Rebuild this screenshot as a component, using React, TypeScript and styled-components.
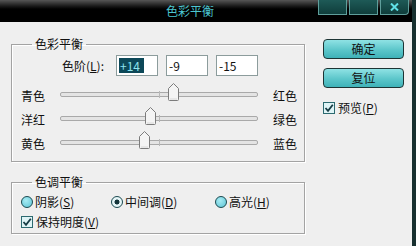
import React from "react";
import styled, { createGlobalStyle } from "styled-components";

const Global = createGlobalStyle`
  html, body {
    margin: 0;
    padding: 0;
    background: #efefef;
  }
  body {
    font-family: "Noto Sans CJK SC", "DejaVu Sans", sans-serif;
    font-size: 12px;
    color: #111;
  }
`;

const Window = styled.div`
  width: 416px;
  height: 246px;
  display: flex;
  flex-direction: column;
  background: #efefef;
  border-right: 4px solid #17302f;
  box-sizing: border-box;
  overflow: hidden;
`;

const TitleBar = styled.div`
  height: 22px;
  flex: none;
  display: flex;
  align-items: flex-start;
  background: linear-gradient(#565656 0px, #1a1a1a 6px, #000 9px, #000 22px);
`;

const Title = styled.div`
  flex: 1;
  padding-left: 62px;
  text-align: center;
  line-height: 22px;
  color: #4cc6d0;
  font-size: 12px;
`;

const WinButtons = styled.div`
  display: flex;
  gap: 2px;
  margin-right: 3px;
`;

const WinButton = styled.div<{ $close?: boolean }>`
  width: 29px;
  height: 15px;
  box-sizing: border-box;
  border: 1px solid #5f9e9b;
  border-top: none;
  background: linear-gradient(#1e5a57, #0f3d3b);
  border-radius: ${(p) => (p.$close ? "0 0 4px 0" : "0")};
  display: flex;
  align-items: center;
  justify-content: center;
`;

const Body = styled.div`
  flex: 1;
  display: flex;
  padding: 15px 0 0 11px;
  gap: 18px;
`;

const LeftCol = styled.div`
  width: 294px;
  display: flex;
  flex-direction: column;
  gap: 13px;
`;

const Group = styled.fieldset<{ $h: number }>`
  margin: 0;
  height: ${(p) => p.$h}px;
  box-sizing: border-box;
  padding: 0 8px 0 9px;
  border: 1px solid #a3a3a3;
  box-shadow: inset 1px 1px 0 #fff, 1px 1px 0 #fff;
  min-width: 0;
`;

const Legend = styled.legend`
  margin-left: 11px;
  padding: 0 3px;
  line-height: 14px;
  font-size: 12px;
`;

const LevelRow = styled.div`
  display: flex;
  align-items: center;
  margin: 4px 0 0 41px;
  gap: 8px;
`;

const LevelLabel = styled.span`
  width: 44px;
  margin-right: 2px;
`;

const NumBox = styled.div`
  width: 42px;
  height: 21px;
  box-sizing: border-box;
  border: 1px solid #8c9c9c;
  background: #fff;
  padding: 2px 0 0 2px;
  font-size: 12px;
  line-height: 15px;
`;

const Selected = styled.span`
  background: #0c4858;
  color: #8fe4ee;
  padding: 0 1px 0 1px;
  display: inline-block;
  width: 23px;
`;

const SliderGrid = styled.div`
  display: grid;
  grid-template-columns: 24px 198px 24px;
  column-gap: 15px;
  row-gap: 5px;
  margin-top: 10px;
  align-items: center;
`;

const SideLabel = styled.span`
  line-height: 19px;
  white-space: nowrap;
`;

const Track = styled.div`
  position: relative;
  height: 3px;
  margin-top: -3px;
  border: 1px solid #a9a9a9;
  border-radius: 2px;
  background: #e4e4e4;
`;

const CenterTick = styled.div`
  position: absolute;
  left: 98px;
  top: -2px;
  width: 1px;
  height: 7px;
  background: #b8b8b8;
`;

const Thumb = styled.svg`
  position: absolute;
  top: -10px;
  width: 11px;
  height: 18px;
  transform: translateX(-5px);
`;

const Underline = styled.span`
  text-decoration: underline;
`;

const RadioRow = styled.div`
  display: flex;
  align-items: center;
  margin-top: 5px;
`;

const RadioItem = styled.label<{ $w: number }>`
  display: flex;
  align-items: center;
  gap: 2px;
  width: ${(p) => p.$w}px;
  line-height: 16px;
`;

const Radio = styled.span<{ $on?: boolean }>`
  width: 12px;
  height: 12px;
  box-sizing: border-box;
  border-radius: 50%;
  border: 1px solid #1b4a50;
  background: ${(p) =>
    p.$on
      ? "radial-gradient(circle, #14343a 0 2.2px, #e6f6f8 2.8px)"
      : "radial-gradient(circle at 40% 35%, #a8ecf4, #5cc4d4)"};
`;

const CheckItem = styled.label<{ $top?: number }>`
  display: flex;
  align-items: center;
  gap: 3px;
  line-height: 16px;
  margin-top: ${(p) => p.$top ?? 0}px;
`;

const Box = styled.span`
  width: 12px;
  height: 12px;
  box-sizing: border-box;
  border: 1px solid #2c6a70;
  background: #dff4f6;
  display: flex;
  align-items: center;
  justify-content: center;
`;

const RightCol = styled.div`
  display: flex;
  flex-direction: column;
  padding-top: 2px;
`;

const Button = styled.div`
  width: 81px;
  height: 20px;
  box-sizing: border-box;
  border: 1px solid #1d3434;
  border-radius: 4px;
  background: linear-gradient(#8fe2e4, #5cc6ca 55%, #3fb2b8);
  text-align: center;
  line-height: 18px;
  margin-bottom: 9px;
`;

const Check = () => (
  <svg width="10" height="10" viewBox="0 0 10 10">
    <path d="M1.5 5 L4 7.8 L8.8 1.8" stroke="#163c44" strokeWidth="1.8" fill="none" />
  </svg>
);

const CloseX = () => (
  <svg width="9" height="8" viewBox="0 0 9 8">
    <path d="M1 0.5 L8 7.5 M8 0.5 L1 7.5" stroke="#5fe0e6" strokeWidth="2" />
  </svg>
);

const sliders = [
  { left: "青色", right: "红色", value: 14 },
  { left: "洋红", right: "绿色", value: -9 },
  { left: "黄色", right: "蓝色", value: -15 },
];

const pos = (v: number) => ((v + 100) / 200) * 196;

const Hot = ({ text, k }: { text: string; k: string }) => (
  <span>
    {text}(<Underline>{k}</Underline>)
  </span>
);

export default function App() {
  return (
    <Window>
      <Global />
      <TitleBar>
        <Title>色彩平衡</Title>
        <WinButtons>
          <WinButton />
          <WinButton />
          <WinButton $close>
            <CloseX />
          </WinButton>
        </WinButtons>
      </TitleBar>
      <Body>
        <LeftCol>
          <Group $h={125}>
            <Legend>色彩平衡</Legend>
            <LevelRow>
              <LevelLabel>
                色阶(<Underline>L</Underline>):
              </LevelLabel>
              <NumBox>
                <Selected>+14</Selected>
              </NumBox>
              <NumBox>-9</NumBox>
              <NumBox>-15</NumBox>
            </LevelRow>
            <SliderGrid>
              {sliders.map((s) => (
                <React.Fragment key={s.left}>
                  <SideLabel>{s.left}</SideLabel>
                  <Track>
                    <CenterTick />
                    <Thumb viewBox="0 0 11 18" style={{ left: pos(s.value) }}>
                      <path
                        d="M0.5 5.5 L5.5 0.5 L10.5 5.5 L10.5 16.5 Q10.5 17.5 9.5 17.5 L1.5 17.5 Q0.5 17.5 0.5 16.5 Z"
                        fill="#f4f4f4"
                        stroke="#7c7c7c"
                      />
                      <path d="M2 16 L9 16" stroke="#d8d8d8" />
                    </Thumb>
                  </Track>
                  <SideLabel>{s.right}</SideLabel>
                </React.Fragment>
              ))}
            </SliderGrid>
          </Group>
          <Group $h={59}>
            <Legend>色调平衡</Legend>
            <RadioRow>
              <RadioItem $w={90}>
                <Radio />
                <Hot text="阴影" k="S" />
              </RadioItem>
              <RadioItem $w={104}>
                <Radio $on />
                <Hot text="中间调" k="D" />
              </RadioItem>
              <RadioItem $w={80}>
                <Radio />
                <Hot text="高光" k="H" />
              </RadioItem>
            </RadioRow>
            <CheckItem $top={4}>
              <Box>
                <Check />
              </Box>
              <Hot text="保持明度" k="V" />
            </CheckItem>
          </Group>
        </LeftCol>
        <RightCol>
          <Button>确定</Button>
          <Button>复位</Button>
          <CheckItem $top={3}>
            <Box>
              <Check />
            </Box>
            <Hot text="预览" k="P" />
          </CheckItem>
        </RightCol>
      </Body>
    </Window>
  );
}
